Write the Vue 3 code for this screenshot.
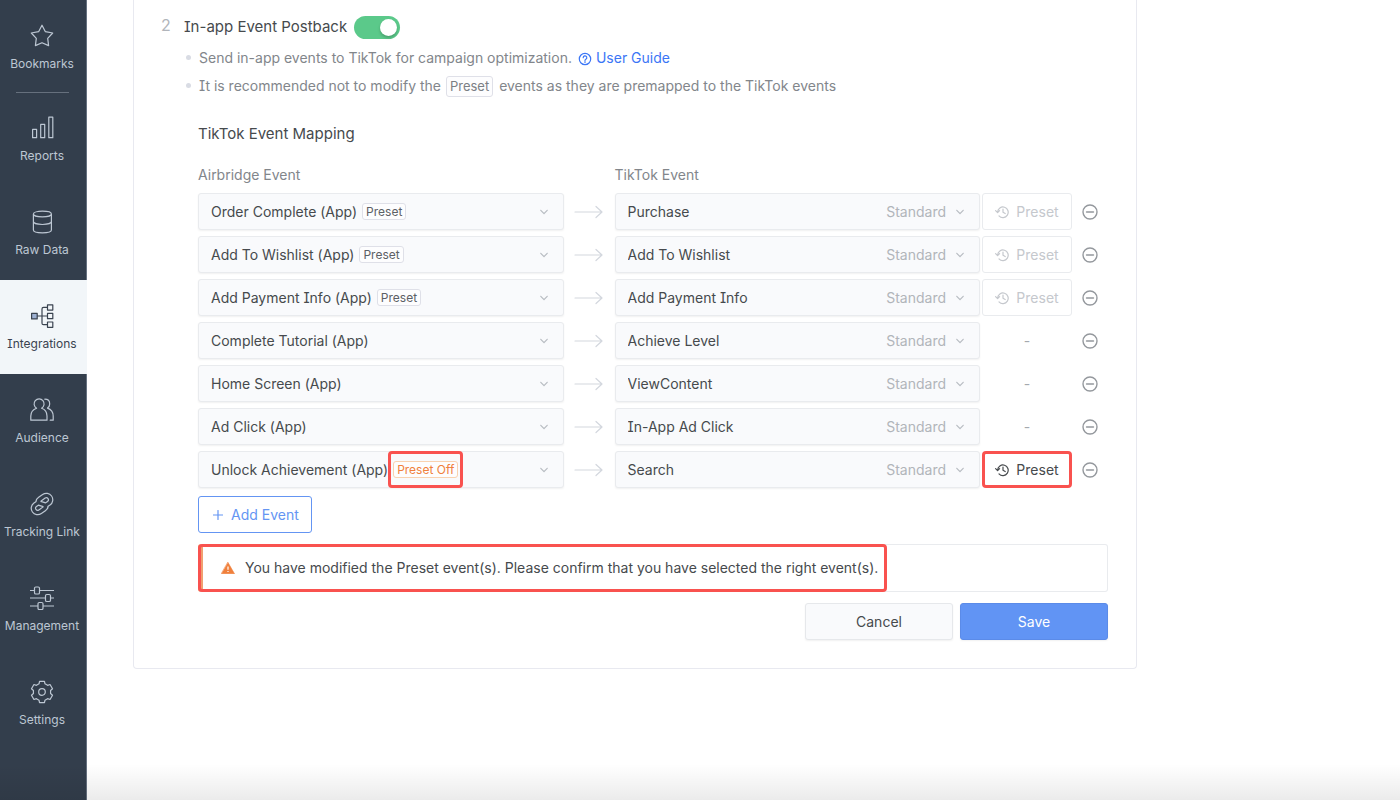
<script setup>
import { ref } from 'vue'

const polar = (deg, r) => {
  const a = (deg * Math.PI) / 180
  return `${(12 + r * Math.sin(a)).toFixed(2)} ${(12 - r * Math.cos(a)).toFixed(2)}`
}

const gear =
  'M' +
  [0, 60, 120, 180, 240, 300]
    .flatMap((d) => [polar(d - 20, 8.7), polar(d - 13, 11), polar(d + 13, 11), polar(d + 20, 8.7)])
    .join('L') +
  'ZM15.3 12a3.3 3.3 0 1 1-6.6 0a3.3 3.3 0 1 1 6.6 0Z'

const bookmark = {
  label: 'Bookmarks',
  icon: 'M12 1.2 15.4 7.7 22.7 9 17.7 14.4 18.6 21.6 12 18.7 5.4 21.6 6.3 14.4 1.3 9 8.6 7.7Z'
}

const chain =
  'M15 13.8l3.8-2.6a4.2 4.2 0 0 0-4.9-6.9l-4 2.8c-3 2.2-1.8 4.3 2.1 4.9c3.9.6 5.1 2.7 2.1 4.9l-4 2.8a4.2 4.2 0 0 1-4.9-6.9l3.8-2.6'

const navItems = [
  { label: 'Reports', icon: 'M2.6 13.4h4v8.3h-4ZM10.7 8.4h4v13.3h-4ZM18.8 1.2h4v20.5h-4Z' },
  {
    label: 'Raw Data',
    icon: 'M21.4 4c0 1.6-4 2.9-9 2.9S3.4 5.6 3.4 4s4-2.8 9-2.8 9 1.2 9 2.8ZM3.4 4v16c0 1.6 4 2.8 9 2.8s9-1.2 9-2.8V4M3.4 11.6c0 1.6 4 2.9 9 2.9s9-1.3 9-2.9'
  },
  {
    label: 'Integrations',
    active: true,
    fill: 'M1.6 9.3h5.6v5.6H1.6Z',
    icon: 'M1.6 9.3h5.6v5.6H1.6ZM17.5 .8h5.3v5.3h-5.3ZM17.5 9.4h5.3v5.3h-5.3ZM17.5 18h5.3v5.3h-5.3ZM7.2 12h10.3M17.5 3.4H13.5q-1.5 0-1.5 1.5v14.3q0 1.5 1.5 1.5H17.5'
  },
  {
    label: 'Audience',
    icon: 'M6.6 10.2A5 5 0 1 1 11.6 10.2C15 11.4 17 14.5 17 18v4.2H.8V18c0-3.5 2.2-6.6 5.8-7.8ZM14.8 1.2c3 0 4.9 2 4.9 4.7 0 1.8-.8 3.2-2.2 4.2 3.7 1.3 5.7 4.4 5.7 8v4.1h-3'
  },
  { label: 'Tracking Link', chain },
  {
    label: 'Management',
    icon: 'M.5 4.5h4M9.5 4.5h14M.5 12h15M20.5 12h3M.5 20h7.5M13 20h10.5M5.8 1h2.4q1.3 0 1.3 1.3v4.4q0 1.3-1.3 1.3H5.8q-1.3 0-1.3-1.3V2.3q0-1.3 1.3-1.3ZM16.8 8.5h2.4q1.3 0 1.3 1.3v4.4q0 1.3-1.3 1.3h-2.4q-1.3 0-1.3-1.3V9.8q0-1.3 1.3-1.3ZM9.3 16.5h2.4q1.3 0 1.3 1.3v4.4q0 1.3-1.3 1.3H9.3q-1.3 0-1.3-1.3v-4.4q0-1.3 1.3-1.3Z'
  },
  { label: 'Settings', icon: gear }
]

const postback = ref(true)

const rows = ref([
  { from: 'Order Complete (App)', tag: 'Preset', to: 'Purchase', reset: 'disabled' },
  { from: 'Add To Wishlist (App)', tag: 'Preset', to: 'Add To Wishlist', reset: 'disabled' },
  { from: 'Add Payment Info (App)', tag: 'Preset', to: 'Add Payment Info', reset: 'disabled' },
  { from: 'Complete Tutorial (App)', to: 'Achieve Level' },
  { from: 'Home Screen (App)', to: 'ViewContent' },
  { from: 'Ad Click (App)', to: 'In-App Ad Click' },
  { from: 'Unlock Achievement (App)', tag: 'Preset Off', off: true, to: 'Search', reset: 'active' }
])
</script>

<template>
  <div class="page">
    <nav class="sidebar">
      <a href="#" class="nav-item first">
        <svg class="nav-icon" viewBox="0 0 24 24"><path :d="bookmark.icon" /></svg>
        <span>{{ bookmark.label }}</span>
      </a>
      <hr class="nav-rule" />
      <a v-for="item in navItems" :key="item.label" href="#" class="nav-item" :class="{ active: item.active }">
        <svg class="nav-icon" viewBox="0 0 24 24">
          <path v-if="item.fill" class="solid" :d="item.fill" />
          <path v-if="item.icon" :d="item.icon" />
          <g v-if="item.chain">
            <path class="chain-out" :d="item.chain" />
            <path class="chain-in" :d="item.chain" />
          </g>
        </svg>
        <span>{{ item.label }}</span>
      </a>
    </nav>

    <main class="main">
      <section class="card">
        <div class="step">2</div>
        <div class="body">
          <div class="title">
            <label for="postback">In-app Event Postback</label>
            <input id="postback" v-model="postback" class="switch" type="checkbox" role="switch" />
          </div>
          <ul class="notes">
            <li>
              Send in-app events to TikTok for campaign optimization.
              <a href="#" class="guide">
                <svg viewBox="0 0 14 14">
                  <circle cx="7" cy="7" r="5.7" />
                  <path d="M5.2 5.7a1.8 1.8 0 1 1 2.7 1.5q-.9.5-.9 1.2M7 9.5v1" />
                </svg>User Guide</a>
            </li>
            <li>
              It is recommended not to modify the
              <span class="tag large">Preset</span>
              events as they are premapped to the TikTok events
            </li>
          </ul>

          <div class="mapping">
            <h2>TikTok Event Mapping</h2>
            <div class="row heads">
              <span>Airbridge Event</span><span></span><span>TikTok Event</span>
            </div>
            <div class="rows">
              <div v-for="(row, i) in rows" :key="i" class="row">
                <div class="field">
                  <select class="fit" aria-label="Airbridge Event" v-model="row.from">
                    <option v-for="r in rows" :key="r.from">{{ r.from }}</option>
                  </select>
                  <span v-if="row.tag" class="tag-wrap" :class="{ marked: row.off }">
                    <span class="tag" :class="{ off: row.off }">{{ row.tag }}</span>
                  </span>
                  <svg class="chevron" viewBox="0 0 10 10"><path d="M1.8 3.3 5 6.7 8.2 3.3" /></svg>
                </div>
                <svg class="arrow" viewBox="0 0 30 14"><path d="M1 7h27M22 1.5 28 7l-6 5.5" /></svg>
                <div class="field">
                  <select class="grow" aria-label="TikTok Event" v-model="row.to">
                    <option v-for="r in rows" :key="r.to">{{ r.to }}</option>
                  </select>
                  <span class="kind">Standard</span>
                  <svg class="chevron" viewBox="0 0 10 10"><path d="M1.8 3.3 5 6.7 8.2 3.3" /></svg>
                </div>
                <button v-if="row.reset" type="button" class="reset" :class="row.reset" :disabled="row.reset === 'disabled'">
                  <svg viewBox="0 0 14 14">
                    <path d="M2.6 7A5.3 5.3 0 1 1 4 10.9M.6 5.6l2 2 2-2M8 4v3.3l2.2 1.2" />
                  </svg>
                  Preset
                </button>
                <span v-else class="dash">-</span>
                <button type="button" class="remove" aria-label="Remove event">
                  <svg viewBox="0 0 16 16"><circle cx="8" cy="8" r="7" /><path d="M4.5 8h7" /></svg>
                </button>
              </div>
            </div>

            <button type="button" class="add">
              <svg viewBox="0 0 10 10"><path d="M5 .5v9M.5 5h9" /></svg>
              Add Event
            </button>

            <div class="alert" role="alert">
              <div class="alert-text">
                <svg viewBox="0 0 14 12">
                  <path class="tri" d="M7 .5 13.5 11.8H.5Z" />
                  <path class="bang" d="M7 4.5v3.2M7 8.9v1.2" />
                </svg>
                You have modified the Preset event(s). Please confirm that you have selected the right event(s).
              </div>
            </div>

            <div class="actions">
              <button type="button" class="cancel">Cancel</button>
              <button type="button" class="save">Save</button>
            </div>
          </div>
        </div>
      </section>
    </main>
  </div>
</template>

<style>
body {
  background: #fff;
}
</style>

<style scoped>
.page {
  position: relative;
  display: flex;
  min-height: 100vh;
  font-family: Inter, "Liberation Sans", sans-serif;
  font-size: 14px;
  line-height: 20px;
  font-feature-settings: "cv08";
  color: #464a4d;
}
.page * {
  box-sizing: border-box;
}
.page::after {
  content: "";
  position: absolute;
  inset: auto 0 0;
  height: 36px;
  background: linear-gradient(rgba(0, 0, 0, 0), rgba(0, 0, 0, 0.08));
  pointer-events: none;
}
button,
select {
  font: inherit;
  font-feature-settings: inherit;
  color: inherit;
  cursor: pointer;
}
svg {
  display: block;
  flex: none;
  fill: none;
  stroke: currentColor;
  stroke-linecap: round;
  stroke-linejoin: round;
}

.sidebar {
  flex: none;
  width: 87px;
  background: #333e4c;
  border-right: 1px solid #667180;
}
.nav-item {
  display: flex;
  flex-direction: column;
  align-items: center;
  gap: 8px;
  height: 94px;
  padding: 24px 2px 0 0;
  font-size: 12px;
  line-height: 16px;
  color: #bdc7d3;
  text-decoration: none;
  white-space: nowrap;
}
.nav-item.first {
  height: 92px;
}
.nav-item.active {
  margin-right: -1px;
  padding-right: 3px;
  background: #f2f6f9;
  color: #3a4350;
}
.nav-icon {
  width: 24px;
  height: 24px;
  stroke-width: 1.2;
}
.nav-icon .solid {
  fill: #9db0d1;
  stroke: none;
}
.chain-out {
  stroke-width: 5.6;
}
.chain-in {
  stroke: #333e4c;
  stroke-width: 3.2;
}
.nav-rule {
  height: 1px;
  margin: 0 17px -1px 16px;
  border: 0;
  background: #66707d;
}

.main {
  flex: 1;
  padding: 0 46px;
}
.card {
  display: flex;
  max-width: 1004px;
  padding: 13px 28px 28px 27px;
  border: 1px solid #e8e9f0;
  border-top: 0;
  border-radius: 0 0 4px 4px;
}
.step {
  flex: none;
  width: 23px;
  font-size: 16px;
  line-height: 24px;
  color: #b1b5bb;
}
.body {
  flex: 1;
}
.title {
  display: flex;
  align-items: center;
  gap: 7px;
  height: 28px;
  font-size: 15px;
}
.switch {
  appearance: none;
  width: 46px;
  height: 23px;
  margin: 0;
  padding: 3px;
  border-radius: 12px;
  background: #c5cad1;
  cursor: pointer;
}
.switch::before {
  content: "";
  display: block;
  width: 17px;
  height: 17px;
  border-radius: 50%;
  background: #fff;
  box-shadow: 0 2px 3px rgba(0, 0, 0, 0.2);
}
.switch:checked {
  background: #5bc98a;
}
.switch:checked::before {
  margin-left: 23px;
}
.notes {
  margin: 3px 0 0;
  padding: 0;
  list-style: none;
  line-height: 28px;
  color: #82868b;
}
.notes li {
  position: relative;
  padding-left: 15px;
}
.notes li::before {
  content: "";
  position: absolute;
  left: 2px;
  top: 11px;
  width: 5px;
  height: 5px;
  border-radius: 50%;
  background: #d9dce4;
}
.guide {
  color: #3b76f6;
  text-decoration: none;
  margin-left: 2px;
}
.guide svg {
  display: inline-block;
  width: 14px;
  height: 14px;
  margin-right: 4px;
  vertical-align: -3px;
  stroke-width: 1.2;
}
.tag {
  display: inline-block;
  padding: 0 3px;
  border: 1px solid #dfe0e8;
  border-radius: 3px;
  background: #fdfdfe;
  font-size: 12px;
  line-height: 15px;
  color: #5c6065;
}
.tag.large {
  margin: 0 2px 0 1px;
  font-size: 13px;
  line-height: 19px;
  color: #7b7f84;
}
.tag.off {
  border-color: #f9d2b0;
  color: #f0803c;
}

.mapping {
  padding-left: 14px;
}
h2 {
  margin: 24px 0 0;
  font-size: 15px;
  line-height: 20px;
  font-weight: 400;
}
.row {
  display: grid;
  grid-template-columns: minmax(0, 1fr) 51px minmax(0, 1fr) 92px 36px;
  align-items: center;
}
.heads {
  margin-top: 21px;
  color: #82868b;
}
.rows {
  display: grid;
  gap: 6px;
  margin-top: 8px;
}
.field {
  display: flex;
  align-items: center;
  height: 37px;
  padding: 0 14px 0 12px;
  border: 1px solid #e9ebee;
  border-radius: 3px;
  background: #f9fafc;
  box-shadow: 0 1px 2px rgba(0, 0, 0, 0.06);
}
select {
  appearance: none;
  min-width: 0;
  padding: 0;
  border: 0;
  background: transparent;
}
.fit {
  field-sizing: content;
}
.grow {
  flex: 1;
}
.tag-wrap {
  position: relative;
  display: flex;
  margin-left: 5px;
}
.marked::after {
  content: "";
  position: absolute;
  inset: -10px -5px;
  border: 3px solid #f9524f;
  border-radius: 4px;
}
.chevron {
  width: 10px;
  height: 10px;
  margin-left: auto;
  color: #b8bcc2;
  stroke-width: 1.2;
}
.kind {
  margin-right: 9px;
  color: #b1b5ba;
}
.arrow {
  width: 30px;
  height: 14px;
  justify-self: center;
  color: #d3d7de;
  stroke-width: 1.2;
}
.reset {
  display: flex;
  align-items: center;
  justify-content: center;
  gap: 7px;
  height: 37px;
  margin-left: 2px;
  padding: 0;
  border: 1px solid #e9ebee;
  border-radius: 3px;
  background: #fff;
}
.reset svg {
  width: 14px;
  height: 14px;
  stroke-width: 1.2;
}
.reset.disabled {
  color: #c5c8cd;
}
.reset.active {
  border: 3px solid #f9524f;
  border-radius: 4px;
}
.dash {
  padding-left: 2px;
  text-align: center;
  color: #a5a9ae;
}
.remove {
  justify-self: center;
  padding: 0;
  border: 0;
  background: none;
  color: #94989d;
}
.remove svg {
  width: 16px;
  height: 16px;
  stroke-width: 1.4;
}
.add {
  display: flex;
  align-items: center;
  gap: 8px;
  height: 37px;
  margin-top: 8px;
  padding: 0 12px 0 14px;
  border: 1px solid #6495f3;
  border-radius: 3px;
  background: #fff;
  color: #6495f3;
}
.add svg {
  width: 10px;
  height: 10px;
  stroke-width: 1.2;
}
.alert {
  display: flex;
  margin-top: 11px;
  border: 1px solid #e9ebee;
  border-left: 5px solid #f0a070;
  border-radius: 3px;
}
.alert-text {
  position: relative;
  display: flex;
  align-items: center;
  gap: 10px;
  height: 46px;
  padding: 0 9px 0 18px;
}
.alert-text::after {
  content: "";
  position: absolute;
  inset: -1px 0 -1px -5px;
  border: 3px solid #f9524f;
  border-radius: 4px;
}
.alert-text svg {
  width: 14px;
  height: 12px;
}
.tri {
  fill: #f0803c;
  stroke: #f0803c;
  stroke-width: 0.6;
}
.bang {
  stroke: #fff;
  stroke-width: 1.2;
  stroke-linecap: butt;
}
.actions {
  display: flex;
  justify-content: flex-end;
  gap: 7px;
  margin-top: 11px;
}
.actions button {
  width: 148px;
  height: 37px;
  padding: 0;
  border: 1px solid #e6e8eb;
  border-radius: 3px;
  background: #f9fafc;
  box-shadow: 0 1px 2px rgba(0, 0, 0, 0.06);
}
.actions .save {
  border-color: #5b8be8;
  background: #6194f4;
  color: #fff;
}
</style>
